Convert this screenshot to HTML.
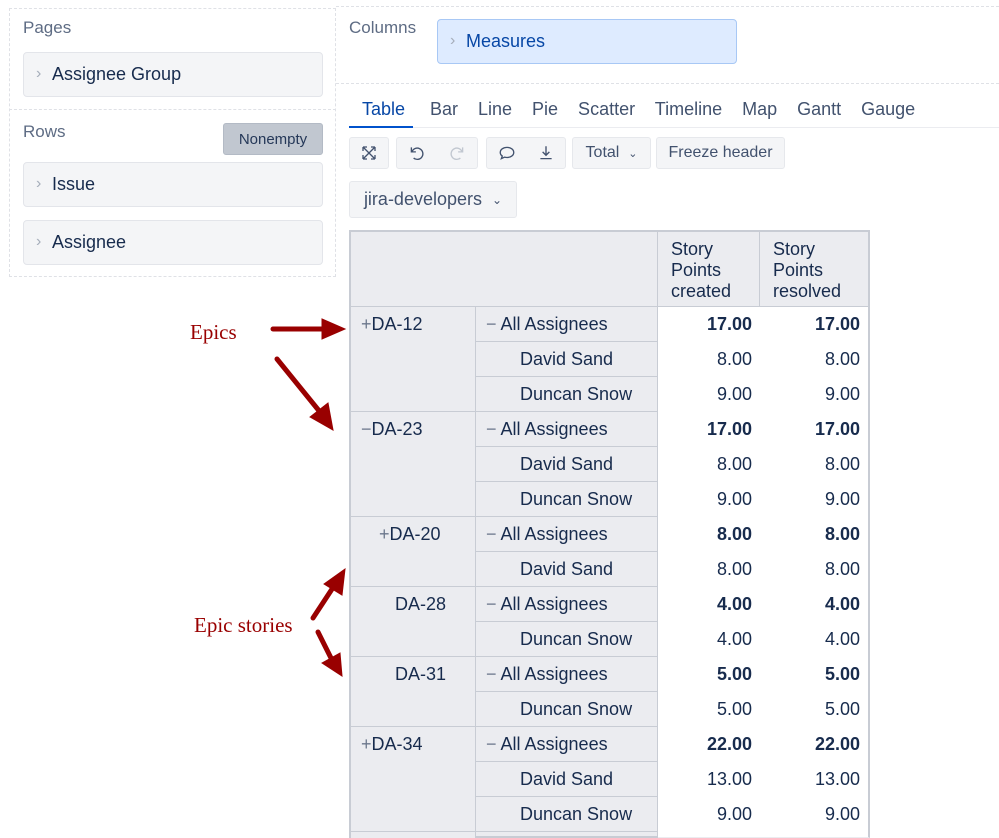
<!DOCTYPE html>
<html style="overflow:hidden;height:838px"><head><style>
body{margin:0;width:999px;height:838px;overflow:hidden;background:#fff;font-family:"Liberation Sans",sans-serif;color:#172b4d;position:relative}
.a{position:absolute}
.lbl{color:#5e6c84;font-size:17px}
.box{position:absolute;background:#f4f5f7;border:1px solid #e3e5ea;border-radius:4px;font-size:18px;box-sizing:border-box;display:flex;align-items:center;padding-left:28px}
.box:before{content:"›";position:absolute;left:12px;color:#a5adba;font-size:16px;top:50%;transform:translateY(-55%)}
.btn{position:absolute;background:#f4f5f7;border:1px solid #e6e8ec;border-radius:3px;box-sizing:border-box;font-size:15px;color:#42526e;display:flex;align-items:center;justify-content:center}
.c{position:absolute;box-sizing:border-box;font-size:18px;line-height:34px;border-bottom:1px solid #dfe1e6;white-space:nowrap}
.h{background:#ebecf0;border-right:2px solid #c8ccd4;border-bottom:2px solid #c8ccd4}
.d{background:#fff;text-align:right;padding-right:8px;border-right:1px solid #e3e5ea;border-bottom:1px solid #ebecf0}
.b{font-weight:bold}
.ep{font-family:"Liberation Serif",serif;color:#990000;font-size:21px}
</style></head><body>
<div class="a" style="left:9px;top:8px;width:327px;height:269px;border:1px dashed #dfe1e6;box-sizing:border-box"></div>
<div class="a" style="left:9px;top:109px;width:327px;border-top:1px dashed #dfe1e6"></div>
<div class="a" style="left:336px;top:6px;width:663px;border-top:1px dashed #dfe1e6"></div>
<div class="a" style="left:336px;top:83px;width:663px;border-top:1px dashed #dfe1e6"></div>
<div class="a lbl" style="left:23px;top:18px">Pages</div>
<div class="box" style="left:23px;top:52px;width:300px;height:45px">Assignee Group</div>
<div class="a lbl" style="left:23px;top:122px">Rows</div>
<div class="btn" style="left:223px;top:123px;width:100px;height:32px;background:#c1c7d0;border-color:#b3bac5;color:#253858">Nonempty</div>
<div class="box" style="left:23px;top:162px;width:300px;height:45px">Issue</div>
<div class="box" style="left:23px;top:220px;width:300px;height:45px">Assignee</div>
<div class="a lbl" style="left:349px;top:18px">Columns</div>
<div class="box" style="left:437px;top:19px;width:300px;height:45px;background:#deebff;border-color:#a8c8f5;color:#0747a6">Measures</div>
<div class="a" style="left:349px;top:127px;width:650px;border-top:1px solid #ebecf0"></div>
<div class="a" style="left:349px;top:126px;width:64px;border-top:2px solid #0052cc"></div>
<div class="a" style="left:362px;top:99px;font-size:18px;color:#0747a6">Table</div>
<div class="a" style="left:430px;top:99px;font-size:18px;color:#42526e;word-spacing:15px">Bar Line Pie Scatter Timeline Map Gantt Gauge</div>
<div class="btn" style="left:349px;top:137px;width:40px;height:32px">
<svg width="16" height="16" viewBox="0 0 16 16" fill="none" stroke="#42526e" stroke-width="1.3"><path d="M2 2l12 12M14 2L2 14M2 2h4M2 2v4M14 2h-4M14 2v4M2 14h4M2 14v-4M14 14h-4M14 14v-4"/></svg></div>
<div class="btn" style="left:396px;top:137px;width:82px;height:32px;justify-content:space-around">
<svg width="18" height="18" viewBox="0 0 16 16" fill="none" stroke="#42526e" stroke-width="1.2"><path d="M3 3v4h4M3.5 7A5 5 0 1 1 5 12.5"/></svg>
<svg width="18" height="18" viewBox="0 0 16 16" fill="none" stroke="#c1c7d0" stroke-width="1.2"><path d="M13 3v4H9M12.5 7A5 5 0 1 0 11 12.5"/></svg></div>
<div class="btn" style="left:486px;top:137px;width:80px;height:32px;justify-content:space-around">
<svg width="18" height="18" viewBox="0 0 16 16" fill="none" stroke="#42526e" stroke-width="1.2"><path d="M8 3c3.3 0 6 2 6 4.5S11.3 12 8 12c-.8 0-1.5-.1-2.2-.3L3 13l.8-2.3C2.7 9.9 2 8.8 2 7.5 2 5 4.7 3 8 3z"/></svg>
<svg width="18" height="18" viewBox="0 0 16 16" fill="none" stroke="#42526e" stroke-width="1.2"><path d="M8 2v8M5 7l3 3 3-3M3 13h10"/></svg></div>
<div class="btn" style="left:572px;top:137px;width:79px;height:32px;font-size:16px">Total&nbsp;&nbsp;<span style="font-size:11px">⌄</span></div>
<div class="btn" style="left:656px;top:137px;width:129px;height:32px;font-size:16px">Freeze header</div>
<div class="btn" style="left:349px;top:181px;width:168px;height:37px;font-size:18px">jira-developers&nbsp;&nbsp;<span style="font-size:12px">⌄</span></div>

<div class="c h" style="left:349px;top:230px;width:310px;height:78px;border-left:2px solid #c8ccd4;border-top:2px solid #c8ccd4"></div>
<div class="c h" style="left:658px;top:230px;width:103px;height:78px;border-top:2px solid #c8ccd4;line-height:21px;padding:7px 0 0 13px;white-space:normal">Story<br>Points<br>created</div>
<div class="c h" style="left:760px;top:230px;width:110px;height:78px;border-top:2px solid #c8ccd4;line-height:21px;padding:7px 0 0 13px;white-space:normal">Story<br>Points<br>resolved</div>

<div class="c h" style="left:349px;top:307px;width:128px;height:106px;border-left:2px solid #c8ccd4;padding-left:10px"><span style="color:#6b778c">+</span>DA-12</div>
<div class="c h" style="left:349px;top:412px;width:128px;height:106px;border-left:2px solid #c8ccd4;padding-left:10px"><span style="color:#6b778c">−</span>DA-23</div>
<div class="c h" style="left:349px;top:517px;width:128px;height:71px;border-left:2px solid #c8ccd4;padding-left:28px"><span style="color:#6b778c">+</span>DA-20</div>
<div class="c h" style="left:349px;top:587px;width:128px;height:71px;border-left:2px solid #c8ccd4;padding-left:44px">DA-28</div>
<div class="c h" style="left:349px;top:657px;width:128px;height:71px;border-left:2px solid #c8ccd4;padding-left:44px">DA-31</div>
<div class="c h" style="left:349px;top:727px;width:128px;height:106px;border-left:2px solid #c8ccd4;padding-left:10px"><span style="color:#6b778c">+</span>DA-34</div>
<div class="c h" style="left:349px;top:832px;width:128px;height:6px;border-left:2px solid #c8ccd4;border-bottom:0"></div>
<div id="rows"></div>
<script>
var r=[["A","17.00"],["David Sand","8.00"],["Duncan Snow","9.00"],["A","17.00"],["David Sand","8.00"],["Duncan Snow","9.00"],["A","8.00"],["David Sand","8.00"],["A","4.00"],["Duncan Snow","4.00"],["A","5.00"],["Duncan Snow","5.00"],["A","22.00"],["David Sand","13.00"],["Duncan Snow","9.00"],["",""]];
var h="";r.forEach(function(x,i){var t=307+35*i,a=x[0]=="A",b=a?" b":"",ht=i==15?6:36;
h+='<div class="c h" style="left:476px;top:'+t+'px;width:183px;height:'+ht+'px;padding-left:'+(a?10:44)+'px">'+(a?'<span style="color:#6b778c">−</span> All Assignees':x[0])+'</div>';
h+='<div class="c d'+b+'" style="left:658px;top:'+t+'px;width:103px;height:'+ht+'px">'+x[1]+'</div>';
h+='<div class="c d'+b+'" style="left:760px;top:'+t+'px;width:110px;height:'+ht+'px;border-right:2px solid #c8ccd4">'+x[1]+'</div>';});
document.getElementById("rows").innerHTML=h;
</script>
<div class="a ep" style="left:190px;top:320px">Epics</div>
<div class="a ep" style="left:194px;top:613px">Epic stories</div>
<svg class="a" style="left:0;top:0" width="999" height="838"><g stroke="#990000" stroke-width="5" stroke-linecap="round" fill="#990000">
<path d="M273 329H325"/><path d="M322 319L345 329L322 339Z" stroke-width="1"/>
<path d="M277 359L320 412"/><path d="M310 417L333 430L328 403Z" stroke-width="1"/>
<path d="M313 618L334 586"/><path d="M324 584L345 569L342 595Z" stroke-width="1"/>
<path d="M318 632L332 660"/><path d="M322 663L342 676L340 653Z" stroke-width="1"/>
</g></svg>
</body></html>
